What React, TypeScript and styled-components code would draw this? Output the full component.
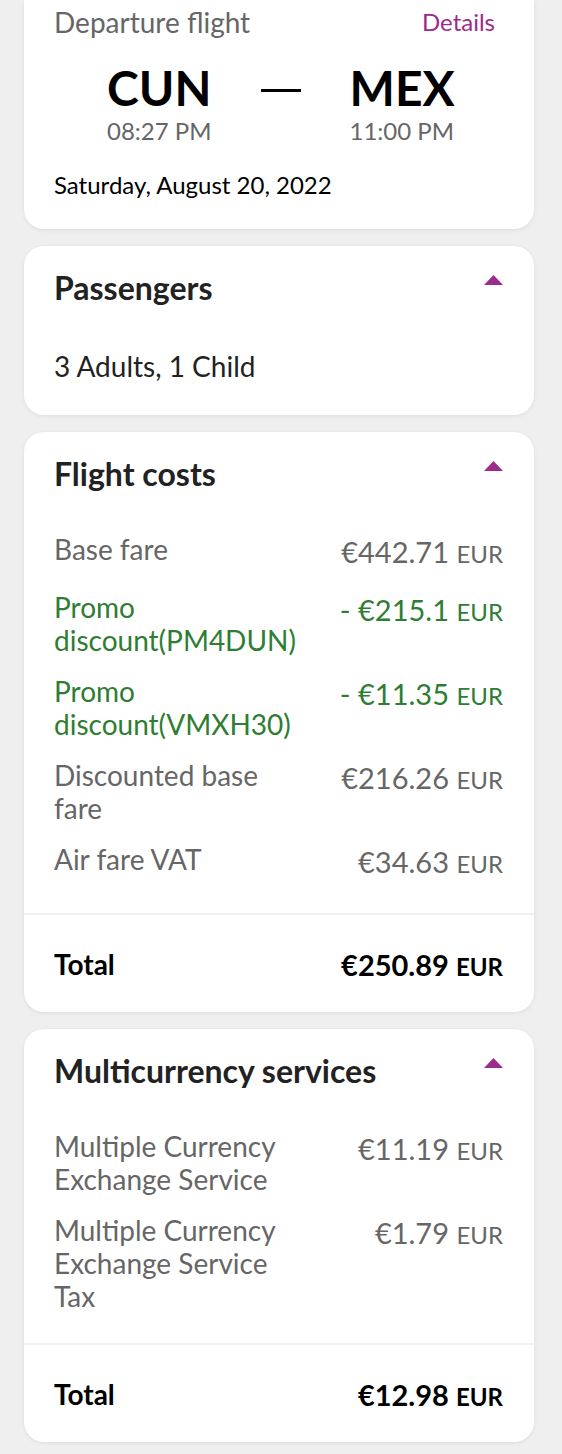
import React from "react";
import styled, { createGlobalStyle } from "styled-components";

const Global = createGlobalStyle`
  html, body { margin: 0; padding: 0; background: #efefef; }
  body { font-family: Lato, "Noto Sans", sans-serif; -webkit-font-smoothing: antialiased; }
`;

const Page = styled.main`
  display: flex;
  flex-direction: column;
  gap: 17px;
  padding: 0 28px 12px 24px;
`;

const Card = styled.section<{ $clipped?: boolean }>`
  background: #fff;
  border-radius: ${(p) => (p.$clipped ? "0 0 20px 20px" : "20px")};
  box-shadow: 0 1px 4px rgba(0, 0, 0, 0.08);
  overflow: hidden;
`;

const FlightBody = styled.div`
  padding: 7px 31px 31px 30px;
`;

const TopRow = styled.div`
  display: flex;
  justify-content: space-between;
  align-items: center;
  font-size: 28px;
  line-height: 30px;
  color: #666;
`;

const DetailsLink = styled.a`
  color: #9c2b8b;
  font-size: 24px;
  padding-right: 8px;
  text-decoration: none;
`;

const Route = styled.div`
  display: flex;
  align-items: flex-start;
  gap: 49px;
  margin-top: 26px;
  padding-left: 53px;
`;

const Stop = styled.div`
  display: flex;
  flex-direction: column;
`;

const Code = styled.span`
  font-size: 48px;
  line-height: 50px;
  font-weight: 700;
  color: #000;
`;

const Time = styled.span`
  margin-top: 5px;
  font-size: 24px;
  line-height: 26px;
  color: #666;
`;

const Dash = styled.span`
  display: block;
  width: 40px;
  height: 3px;
  margin-top: 26px;
  background: #000;
`;

const DateText = styled.div`
  margin-top: 28px;
  font-size: 24px;
  line-height: 26px;
  color: #000;
`;

const Header = styled.div`
  display: flex;
  justify-content: space-between;
  align-items: flex-start;
  padding: 25px 31px 0 30px;
`;

const Title = styled.h2`
  margin: 0;
  font-size: 32px;
  line-height: 34px;
  font-weight: 700;
  color: #222;
`;

const Caret = styled.svg`
  margin-top: 4px;
  display: block;
  flex-shrink: 0;
`;

const Body = styled.div<{ $top?: number; $bottom?: number }>`
  padding: ${(p) => p.$top ?? 42}px 31px ${(p) => p.$bottom ?? 30}px 30px;
`;

const PlainText = styled.div`
  font-size: 28px;
  line-height: 33px;
  color: #222;
`;

const Rows = styled.div`
  display: flex;
  flex-direction: column;
  gap: 18px;
`;

const Row = styled.div<{ $tone?: "gray" | "green" | "black" }>`
  display: grid;
  grid-template-columns: 50% 50%;
  align-items: start;
  color: ${(p) => (p.$tone === "green" ? "#2e7d32" : p.$tone === "black" ? "#000" : "#666")};
  font-weight: ${(p) => (p.$tone === "black" ? 700 : 400)};
`;

const Label = styled.span`
  font-size: 28px;
  line-height: 33px;
`;

const Amount = styled.span<{ $tall?: boolean }>`
  text-align: right;
  white-space: nowrap;
  font-size: 29px;
  line-height: ${(p) => (p.$tall ? 38 : 33)}px;
`;

const Currency = styled.span`
  font-size: 24px;
`;

const Divider = styled.hr`
  margin: 0;
  border: 0;
  height: 2px;
  background: #f0f0f0;
`;

const TotalBox = styled.div`
  padding: 33px 31px 29px 30px;
`;

type Tone = "gray" | "green" | "black";
type Line = { label: string; amount: string; tone?: Tone };

const flightCosts: Line[] = [
  { label: "Base fare", amount: "€442.71" },
  { label: "Promo discount(PM4DUN)", amount: "- €215.1", tone: "green" },
  { label: "Promo discount(VMXH30)", amount: "- €11.35", tone: "green" },
  { label: "Discounted base fare", amount: "€216.26" },
  { label: "Air fare VAT", amount: "€34.63" },
];

const multiCosts: Line[] = [
  { label: "Multiple Currency Exchange Service", amount: "€11.19" },
  { label: "Multiple Currency Exchange Service Tax", amount: "€1.79" },
];

const Up = () => (
  <Caret width="19" height="10" viewBox="0 0 19 10" aria-hidden>
    <polygon points="9.5,0 19,10 0,10" fill="#9c2b8b" />
  </Caret>
);

const SectionHeader = ({ title }: { title: string }) => (
  <Header>
    <Title>{title}</Title>
    <Up />
  </Header>
);

const CostRow = ({ label, amount, tone, tall = true }: Line & { tall?: boolean }) => (
  <Row $tone={tone}>
    <Label>{label}</Label>
    <Amount $tall={tall}>
      {amount} <Currency>EUR</Currency>
    </Amount>
  </Row>
);

const CostCard = ({ title, lines, total }: { title: string; lines: Line[]; total: string }) => (
  <Card>
    <SectionHeader title={title} />
    <Body>
      <Rows>
        {lines.map((l) => (
          <CostRow key={l.label} {...l} />
        ))}
      </Rows>
    </Body>
    <Divider />
    <TotalBox>
      <CostRow label="Total" amount={total} tone="black" tall={false} />
    </TotalBox>
  </Card>
);

export default function App() {
  return (
    <>
      <Global />
      <Page>
        <Card $clipped>
          <FlightBody>
            <TopRow>
              <span>Departure flight</span>
              <DetailsLink href="#">Details</DetailsLink>
            </TopRow>
            <Route>
              <Stop>
                <Code>CUN</Code>
                <Time>08:27 PM</Time>
              </Stop>
              <Dash />
              <Stop>
                <Code>MEX</Code>
                <Time>11:00 PM</Time>
              </Stop>
            </Route>
            <DateText>Saturday, August 20, 2022</DateText>
          </FlightBody>
        </Card>
        <Card>
          <SectionHeader title="Passengers" />
          <Body $top={45} $bottom={32}>
            <PlainText>3 Adults, 1 Child</PlainText>
          </Body>
        </Card>
        <CostCard title="Flight costs" lines={flightCosts} total="€250.89" />
        <CostCard title="Multicurrency services" lines={multiCosts} total="€12.98" />
      </Page>
    </>
  );
}
